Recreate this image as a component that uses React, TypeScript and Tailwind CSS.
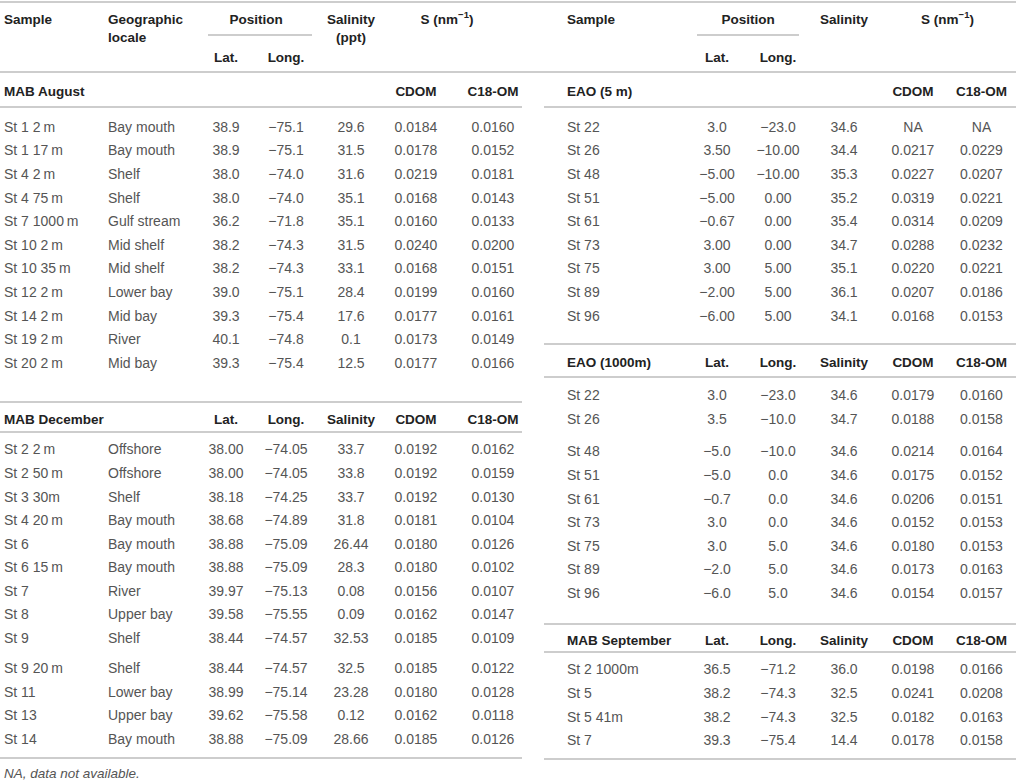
import React from "react";

const M = "\u2212";
const T = "\u2009";

type Align = { w: string; cls: string };

const LCOLS: Align[] = [
  { w: "w-[104px]", cls: "pl-[4px] text-left" },
  { w: "w-[92px]", cls: "pl-[4px] text-left" },
  { w: "w-[60px]", cls: "text-center" },
  { w: "w-[60px]", cls: "text-center" },
  { w: "w-[70px]", cls: "text-center" },
  { w: "w-[60px]", cls: "text-center" },
  { w: "w-[76px]", cls: "pl-[18px] text-center" },
];

const RCOLS: Align[] = [
  { w: "w-[143px]", cls: "pl-[23px] text-left" },
  { w: "w-[60px]", cls: "text-center" },
  { w: "w-[62px]", cls: "text-center" },
  { w: "w-[70px]", cls: "text-center" },
  { w: "w-[68px]", cls: "text-center" },
  { w: "w-[69px]", cls: "text-center" },
];

const mabAug: string[][] = [
  [`St 1 2${T}m`, "Bay mouth", "38.9", `${M}75.1`, "29.6", "0.0184", "0.0160"],
  [`St 1 17${T}m`, "Bay mouth", "38.9", `${M}75.1`, "31.5", "0.0178", "0.0152"],
  [`St 4 2${T}m`, "Shelf", "38.0", `${M}74.0`, "31.6", "0.0219", "0.0181"],
  [`St 4 75${T}m`, "Shelf", "38.0", `${M}74.0`, "35.1", "0.0168", "0.0143"],
  [`St 7 1000${T}m`, "Gulf stream", "36.2", `${M}71.8`, "35.1", "0.0160", "0.0133"],
  [`St 10 2${T}m`, "Mid shelf", "38.2", `${M}74.3`, "31.5", "0.0240", "0.0200"],
  [`St 10 35${T}m`, "Mid shelf", "38.2", `${M}74.3`, "33.1", "0.0168", "0.0151"],
  [`St 12 2${T}m`, "Lower bay", "39.0", `${M}75.1`, "28.4", "0.0199", "0.0160"],
  [`St 14 2${T}m`, "Mid bay", "39.3", `${M}75.4`, "17.6", "0.0177", "0.0161"],
  [`St 19 2${T}m`, "River", "40.1", `${M}74.8`, "0.1", "0.0173", "0.0149"],
  [`St 20 2${T}m`, "Mid bay", "39.3", `${M}75.4`, "12.5", "0.0177", "0.0166"],
];

const mabDecA: string[][] = [
  [`St 2 2${T}m`, "Offshore", "38.00", `${M}74.05`, "33.7", "0.0192", "0.0162"],
  [`St 2 50${T}m`, "Offshore", "38.00", `${M}74.05`, "33.8", "0.0192", "0.0159"],
  ["St 3 30m", "Shelf", "38.18", `${M}74.25`, "33.7", "0.0192", "0.0130"],
  [`St 4 20${T}m`, "Bay mouth", "38.68", `${M}74.89`, "31.8", "0.0181", "0.0104"],
  ["St 6", "Bay mouth", "38.88", `${M}75.09`, "26.44", "0.0180", "0.0126"],
  [`St 6 15${T}m`, "Bay mouth", "38.88", `${M}75.09`, "28.3", "0.0180", "0.0102"],
  ["St 7", "River", "39.97", `${M}75.13`, "0.08", "0.0156", "0.0107"],
  ["St 8", "Upper bay", "39.58", `${M}75.55`, "0.09", "0.0162", "0.0147"],
  ["St 9", "Shelf", "38.44", `${M}74.57`, "32.53", "0.0185", "0.0109"],
];
const mabDecB: string[][] = [
  [`St 9 20${T}m`, "Shelf", "38.44", `${M}74.57`, "32.5", "0.0185", "0.0122"],
  ["St 11", "Lower bay", "38.99", `${M}75.14`, "23.28", "0.0180", "0.0128"],
  ["St 13", "Upper bay", "39.62", `${M}75.58`, "0.12", "0.0162", "0.0118"],
  ["St 14", "Bay mouth", "38.88", `${M}75.09`, "28.66", "0.0185", "0.0126"],
];

const eao5: string[][] = [
  ["St 22", "3.0", `${M}23.0`, "34.6", "NA", "NA"],
  ["St 26", "3.50", `${M}10.00`, "34.4", "0.0217", "0.0229"],
  ["St 48", `${M}5.00`, `${M}10.00`, "35.3", "0.0227", "0.0207"],
  ["St 51", `${M}5.00`, "0.00", "35.2", "0.0319", "0.0221"],
  ["St 61", `${M}0.67`, "0.00", "35.4", "0.0314", "0.0209"],
  ["St 73", "3.00", "0.00", "34.7", "0.0288", "0.0232"],
  ["St 75", "3.00", "5.00", "35.1", "0.0220", "0.0221"],
  ["St 89", `${M}2.00`, "5.00", "36.1", "0.0207", "0.0186"],
  ["St 96", `${M}6.00`, "5.00", "34.1", "0.0168", "0.0153"],
];

const eao1000A: string[][] = [
  ["St 22", "3.0", `${M}23.0`, "34.6", "0.0179", "0.0160"],
  ["St 26", "3.5", `${M}10.0`, "34.7", "0.0188", "0.0158"],
];
const eao1000B: string[][] = [
  ["St 48", `${M}5.0`, `${M}10.0`, "34.6", "0.0214", "0.0164"],
  ["St 51", `${M}5.0`, "0.0", "34.6", "0.0175", "0.0152"],
  ["St 61", `${M}0.7`, "0.0", "34.6", "0.0206", "0.0151"],
  ["St 73", "3.0", "0.0", "34.6", "0.0152", "0.0153"],
  ["St 75", "3.0", "5.0", "34.6", "0.0180", "0.0153"],
  ["St 89", `${M}2.0`, "5.0", "34.6", "0.0173", "0.0163"],
  ["St 96", `${M}6.0`, "5.0", "34.6", "0.0154", "0.0157"],
];

const mabSep: string[][] = [
  ["St 2 1000m", "36.5", `${M}71.2`, "36.0", "0.0198", "0.0166"],
  ["St 5", "38.2", `${M}74.3`, "32.5", "0.0241", "0.0208"],
  ["St 5 41m", "38.2", `${M}74.3`, "32.5", "0.0182", "0.0163"],
  ["St 7", "39.3", `${M}75.4`, "14.4", "0.0178", "0.0158"],
];

function Line() {
  return <div className="h-[2px] w-full bg-[#cdcdcd]" />;
}

function DataRow({ cells, cols }: { cells: string[]; cols: Align[] }) {
  return (
    <div className="flex h-[23.6px] items-center text-[14px] leading-[18px] text-[#555555]">
      {cells.map((c, i) => (
        <div key={i} className={`${cols[i].w} ${cols[i].cls} shrink-0 whitespace-nowrap`}>
          {c}
        </div>
      ))}
    </div>
  );
}

function HeadRow({
  cells,
  cols,
  h,
  pt,
}: {
  cells: string[];
  cols: Align[];
  h: string;
  pt: string;
}) {
  return (
    <div className={`flex ${h} ${pt} items-center text-[13.5px] font-bold leading-[18px] text-[#222222]`}>
      {cells.map((c, i) => (
        <div key={i} className={`${cols[i].w} ${cols[i].cls} shrink-0 whitespace-nowrap`}>
          {c}
        </div>
      ))}
    </div>
  );
}

function SUnit() {
  return (
    <span>
      S (nm<sup className="relative top-[-1px] align-top text-[9.5px] leading-none">{M}1</sup>)
    </span>
  );
}

export default function App() {
  return (
    <div className="relative h-[781px] w-[1016px] overflow-hidden bg-white font-['Liberation_Sans',Arial,sans-serif]">
      <div className="h-[1px]" />
      <Line />
      {/* Header */}
      <div className="flex h-[68px] text-[13.5px] font-bold leading-[18px] text-[#222222]">
        {/* Left header */}
        <div className="flex w-[522px] pt-[8px]">
          <div className="w-[104px] pl-[4px]">Sample</div>
          <div className="w-[92px] pl-[4px]">
            <div>Geographic</div>
            <div>locale</div>
          </div>
          <div className="flex w-[120px] flex-col">
            <div className="text-center">Position</div>
            <div className="ml-[12px] mr-[4px] mt-[5px] h-[2px] bg-[#cdcdcd]" />
            <div className="mt-[13px] flex">
              <div className="w-[60px] text-center">Lat.</div>
              <div className="w-[60px] text-center">Long.</div>
            </div>
          </div>
          <div className="w-[70px] text-center">
            <div>Salinity</div>
            <div>(ppt)</div>
          </div>
          <div className="w-[136px] pr-[14px] text-center">
            <SUnit />
          </div>
        </div>
        <div className="w-[22px]" />
        {/* Right header */}
        <div className="flex w-[472px] pt-[8px]">
          <div className="w-[143px] pl-[23px]">Sample</div>
          <div className="flex w-[122px] flex-col">
            <div className="text-center">Position</div>
            <div className="mx-[10px] mt-[5px] h-[2px] bg-[#cdcdcd]" />
            <div className="mt-[13px] flex">
              <div className="w-[60px] text-center">Lat.</div>
              <div className="w-[62px] text-center">Long.</div>
            </div>
          </div>
          <div className="w-[70px] text-center">Salinity</div>
          <div className="w-[137px] text-center">
            <SUnit />
          </div>
        </div>
      </div>
      <Line />
      {/* Body */}
      <div className="flex">
        {/* Left */}
        <div className="flex w-[522px] flex-col">
          <HeadRow
            cols={LCOLS}
            h="h-[33px]"
            pt="pt-[5px]"
            cells={["MAB August", "", "", "", "", "CDOM", "C18-OM"]}
          />
          <Line />
          <div className="h-[7px]" />
          {mabAug.map((r, i) => (
            <DataRow key={i} cells={r} cols={LCOLS} />
          ))}
          <div className="h-[26px]" />
          <Line />
          <div className="relative flex h-[28px] items-center pt-[6px] text-[13.5px] font-bold leading-[18px] text-[#222222]">
            <div className="w-[196px] shrink-0 whitespace-nowrap pl-[4px]">MAB December</div>
            <div className="w-[60px] text-center">Lat.</div>
            <div className="w-[60px] text-center">Long.</div>
            <div className="w-[70px] text-center">Salinity</div>
            <div className="w-[60px] text-center">CDOM</div>
            <div className="w-[76px] pl-[18px] text-center">C18-OM</div>
          </div>
          <Line />
          <div className="h-[5px]" />
          {mabDecA.map((r, i) => (
            <DataRow key={i} cells={r} cols={LCOLS} />
          ))}
          <div className="h-[6.4px]" />
          {mabDecB.map((r, i) => (
            <DataRow key={i} cells={r} cols={LCOLS} />
          ))}
          <div className="h-[6px]" />
          <Line />
          <div className="pl-[4px] pt-[7px] text-[13.5px] italic leading-[16px] text-[#555555]">
            NA, data not available.
          </div>
        </div>
        <div className="w-[22px] shrink-0" />
        {/* Right */}
        <div className="flex w-[472px] flex-col">
          <HeadRow
            cols={RCOLS}
            h="h-[33px]"
            pt="pt-[5px]"
            cells={["EAO (5 m)", "", "", "", "CDOM", "C18-OM"]}
          />
          <Line />
          <div className="h-[7px]" />
          {eao5.map((r, i) => (
            <DataRow key={i} cells={r} cols={RCOLS} />
          ))}
          <div className="h-[16px]" />
          <Line />
          <HeadRow
            cols={RCOLS}
            h="h-[31px]"
            pt="pt-[5px]"
            cells={["EAO (1000m)", "Lat.", "Long.", "Salinity", "CDOM", "C18-OM"]}
          />
          <Line />
          <div className="h-[5px]" />
          {eao1000A.map((r, i) => (
            <DataRow key={i} cells={r} cols={RCOLS} />
          ))}
          <div className="h-[9px]" />
          {eao1000B.map((r, i) => (
            <DataRow key={i} cells={r} cols={RCOLS} />
          ))}
          <div className="h-[18px]" />
          <Line />
          <HeadRow
            cols={RCOLS}
            h="h-[26px]"
            pt="pt-[6px]"
            cells={["MAB September", "Lat.", "Long.", "Salinity", "CDOM", "C18-OM"]}
          />
          <Line />
          <div className="h-[5px]" />
          {mabSep.map((r, i) => (
            <DataRow key={i} cells={r} cols={RCOLS} />
          ))}
          <div className="h-[6px]" />
          <Line />
        </div>
      </div>
    </div>
  );
}
